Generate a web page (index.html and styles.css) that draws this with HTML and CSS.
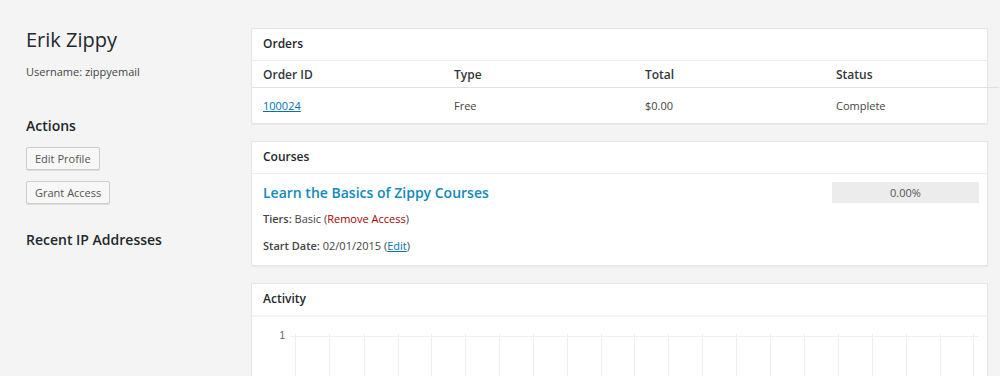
FILE: index.html
```html
<!DOCTYPE html>
<html>
<head>
<meta charset="utf-8">
<link rel="stylesheet" href="styles.css">
</head>
<body>
<div class="page">
  <aside class="side">
    <h1 class="name">Erik Zippy</h1>
    <p class="username">Username: zippyemail</p>
    <h2 class="side-title">Actions</h2>
    <div class="actions">
      <button class="btn">Edit Profile</button>
      <button class="btn">Grant Access</button>
    </div>
    <h2 class="side-title ip">Recent IP Addresses</h2>
  </aside>
  <main class="main">
    <section class="panel">
      <div class="panel-head">Orders</div>
      <table class="orders">
        <thead>
          <tr><th>Order ID</th><th>Type</th><th>Total</th><th>Status</th></tr>
        </thead>
        <tbody>
          <tr><td><a href="#" class="link">100024</a></td><td>Free</td><td>$0.00</td><td>Complete</td></tr>
        </tbody>
      </table>
    </section>
    <section class="panel">
      <div class="panel-head">Courses</div>
      <div class="course">
        <div class="course-top">
          <a href="#" class="course-title">Learn the Basics of Zippy Courses</a>
          <div class="progress">0.00%</div>
        </div>
        <p class="meta"><strong>Tiers:</strong> Basic (<a href="#" class="remove">Remove Access</a>)</p>
        <p class="meta"><strong>Start Date:</strong> 02/01/2015 (<a href="#" class="link">Edit</a>)</p>
      </div>
    </section>
    <section class="panel activity">
      <div class="panel-head head-thick">Activity</div>
      <svg class="chart" width="735" height="62" viewBox="0 0 735 62">
        <text x="33" y="22" text-anchor="end" class="tick">1</text>
        <line x1="38" y1="19.5" x2="726" y2="19.5" class="grid"/>
        <g class="grid">
          <line x1="43.5" y1="17" x2="43.5" y2="62"/>
          <line x1="77.5" y1="17" x2="77.5" y2="62"/>
          <line x1="112.5" y1="17" x2="112.5" y2="62"/>
          <line x1="146.5" y1="17" x2="146.5" y2="62"/>
          <line x1="179.5" y1="17" x2="179.5" y2="62"/>
          <line x1="213.5" y1="17" x2="213.5" y2="62"/>
          <line x1="247.5" y1="17" x2="247.5" y2="62"/>
          <line x1="281.5" y1="17" x2="281.5" y2="62"/>
          <line x1="315.5" y1="17" x2="315.5" y2="62"/>
          <line x1="349.5" y1="17" x2="349.5" y2="62"/>
          <line x1="382.5" y1="17" x2="382.5" y2="62"/>
          <line x1="416.5" y1="17" x2="416.5" y2="62"/>
          <line x1="450.5" y1="17" x2="450.5" y2="62"/>
          <line x1="484.5" y1="17" x2="484.5" y2="62"/>
          <line x1="518.5" y1="17" x2="518.5" y2="62"/>
          <line x1="552.5" y1="17" x2="552.5" y2="62"/>
          <line x1="586.5" y1="17" x2="586.5" y2="62"/>
          <line x1="620.5" y1="17" x2="620.5" y2="62"/>
          <line x1="654.5" y1="17" x2="654.5" y2="62"/>
          <line x1="688.5" y1="17" x2="688.5" y2="62"/>
          <line x1="721.5" y1="17" x2="721.5" y2="62"/>
        </g>
      </svg>
    </section>
  </main>
</div>
</body>
</html>
```

FILE: styles.css
```css
html, body {
  margin: 0;
  padding: 0;
  background: #f4f4f4;
  font-family: "Open Sans", "Noto Sans", sans-serif;
  color: #444;
  overflow: hidden;
}

.page {
  display: flex;
  align-items: flex-start;
  padding: 28px 12px 0 26px;
  height: 376px;
  box-sizing: border-box;
}

.side {
  width: 225px;
  flex-shrink: 0;
}

.name {
  margin: 0;
  font-size: 20px;
  font-weight: 400;
  line-height: 24px;
  color: #23282d;
}

.username {
  margin: 12px 0 0;
  font-size: 11px;
  line-height: 16px;
  color: #444;
}

.side-title {
  margin: 36px 0 0;
  font-size: 14px;
  font-weight: 600;
  line-height: 20px;
  color: #23282d;
}

.side-title.ip {
  margin-top: 26px;
}

.actions {
  display: flex;
  flex-direction: column;
  align-items: flex-start;
  gap: 11px;
  margin-top: 11px;
}

.btn {
  font-family: inherit;
  font-size: 11px;
  line-height: 21px;
  height: 23px;
  padding: 0 8px;
  color: #555;
  background: #f7f7f7;
  border: 1px solid #ccc;
  border-radius: 2px;
  box-shadow: 0 1px 0 #ddd;
}

.main {
  flex: 1;
  min-width: 0;
  display: flex;
  flex-direction: column;
  gap: 17px;
}

.panel {
  background: #fff;
  border: 1px solid #e5e5e5;
  box-shadow: 0 1px 1px rgba(0, 0, 0, 0.04);
}

.panel-head {
  height: 31px;
  line-height: 30px;
  padding: 0 11px;
  font-size: 12px;
  font-weight: 600;
  color: #23282d;
  border-bottom: 1px solid #eee;
}

.panel-head.head-thick {
  border-bottom: 2px solid #f3f3f3;
}

.orders {
  width: 747px;
  border-collapse: collapse;
  font-size: 11px;
}

.orders th {
  text-align: left;
  font-weight: 600;
  font-size: 12px;
  color: #32373c;
  height: 26px;
  padding: 0 11px;
  border-bottom: 1px solid #e1e1e1;
  width: 169px;
}

.orders th:last-child {
  width: auto;
}

.orders td {
  height: 35px;
  padding: 0 11px;
  color: #444;
}

.link {
  color: #0073aa;
  text-decoration: underline;
}

.course {
  padding: 8px 8px 11px 11px;
}

.course-top {
  display: flex;
  justify-content: space-between;
  align-items: flex-start;
}

.course-title {
  font-size: 14px;
  font-weight: 600;
  line-height: 21px;
  color: #0f8abb;
  text-decoration: none;
}

.progress {
  width: 147px;
  height: 21px;
  line-height: 21px;
  background: #ececec;
  text-align: center;
  font-size: 11px;
  color: #555;
}

.meta {
  margin: 8px 0 0;
  font-size: 11px;
  line-height: 16px;
  color: #444;
}

.meta + .meta {
  margin-top: 11px;
}

.meta strong {
  font-weight: 600;
}

.remove {
  color: #a00;
  text-decoration: none;
}

.activity {
  flex: 1;
  border-bottom: none;
}

.chart {
  display: block;
}

.tick {
  font-family: "Liberation Sans", Arial, sans-serif;
  font-size: 10px;
  fill: #666;
}

.grid {
  stroke: #eeeeee;
  stroke-width: 1;
}
```
